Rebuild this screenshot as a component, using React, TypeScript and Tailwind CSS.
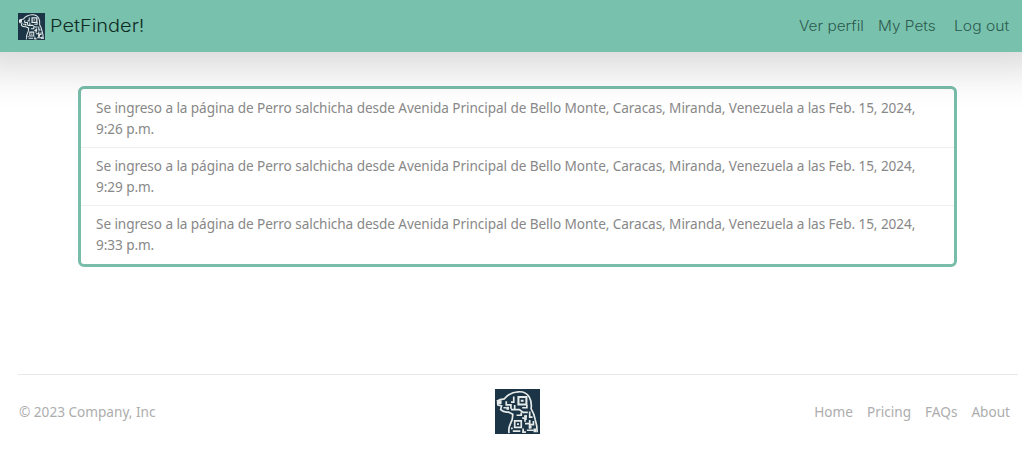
const entries = ["9:26 p.m.", "9:29 p.m.", "9:33 p.m."];

function Logo({ className }: { className: string }) {
  return (
    <svg viewBox="0 0 48 48" className={className} aria-hidden="true">
      <rect width="48" height="48" fill="#1b3546" />
      <g fill="none" stroke="#e6ebe9">
        <path
          strokeWidth="1.8"
          d="M2 13Q5 11 10 10.500Q15 3.500 25 3Q33 2.500 36.500 8.500Q39.500 14 38.500 21Q42 27 43 33Q45 39 45 46M3 13V17L7 18L6 22Q9 25 14 24.500L19 27Q19 33 16.500 37Q14 42 15 47"
        />
        <path strokeWidth="2.200" d="M25 8.500h8.500v8H25z" />
        <path
          strokeWidth="1.800"
          d="M20 8v6h-3M12 13v4h5v4M21 17v5h-4M21 22h5l4 3h5M29 20h5v-3M23 28h5v-3M33 28v5M37 24v6h3M21 34h7v7h-7zM29 31h3v4M32 37h5v-4M41 34v4h-4v4M30 42v4M34 44h7M19 45h8M18 41v2M9 20h3"
        />
      </g>
      <path
        d="M2 12h5v4H2zM27.500 11.500h3v2h-3zM23.500 36.500h2v2h-2zM36 39h3v3h-3zM12 19h3v3h-3zM31 28h3v2h-3zM41 42h3v4h-3zM29 45h4v2h-4z"
        fill="#e6ebe9"
      />
    </svg>
  );
}

export default function App() {
  return (
    <div className="flex h-[453px] flex-col overflow-hidden bg-white font-['Noto_Sans','Open_Sans',sans-serif]">
      <nav className="relative z-10 flex h-[52px] shrink-0 items-center justify-between bg-[#78c2ad] pl-[18px] shadow-[0_-15px_43px_30px_rgba(0,0,0,0.165)]">
        <a className="flex items-center gap-[5px] pt-px font-[Inter,sans-serif] text-[17.5px] leading-[27px] font-light text-[#102b24]">
          <Logo className="size-[27px]" />
          <span className="-mt-0.5 origin-left scale-x-[1.14] whitespace-nowrap">PetFinder!</span>
        </a>
        <div className="flex font-[Inter,sans-serif] text-[14px] leading-5 font-light whitespace-nowrap text-[#2c5a4d]">
          <a className="w-[79px] origin-left scale-x-[1.1]">Ver perfil</a>
          <a className="w-[76px] origin-left scale-x-[1.1]">My Pets</a>
          <a className="w-[68px] origin-left scale-x-[1.12]">Log out</a>
        </div>
      </nav>
      <main className="pt-[34px] pr-[65px] pl-[78px]">
        <ul className="h-[181px] rounded-md border-3 border-[#78bda9] pt-px text-[13.6px] leading-[21px] text-[#888]">
          {entries.map((time) => (
            <li key={time} className="h-[58px] border-b border-[#efefef] px-[15px] pt-[6.5px] last:border-b-0">
              <p className="tracking-[-0.075px] whitespace-nowrap">
                Se ingreso a la página de Perro salchicha desde Avenida Principal de Bello Monte, Caracas, Miranda, Venezuela a las Feb. 15, 2024,
                <br />
                {time}
              </p>
            </li>
          ))}
        </ul>
      </main>
      <footer className="mt-[107px] mr-1 ml-[18px] flex h-[75px] items-center border-t border-[#e8e8e8] pr-2 text-[13.6px] leading-[22px] text-[#adadad]">
        <p className="w-[477px] pl-px">© 2023 Company, Inc</p>
        <Logo className="-mt-px size-[45px]" />
        <nav className="ml-auto flex gap-[14px]">
          <a>Home</a>
          <a>Pricing</a>
          <a>FAQs</a>
          <a>About</a>
        </nav>
      </footer>
    </div>
  );
}
